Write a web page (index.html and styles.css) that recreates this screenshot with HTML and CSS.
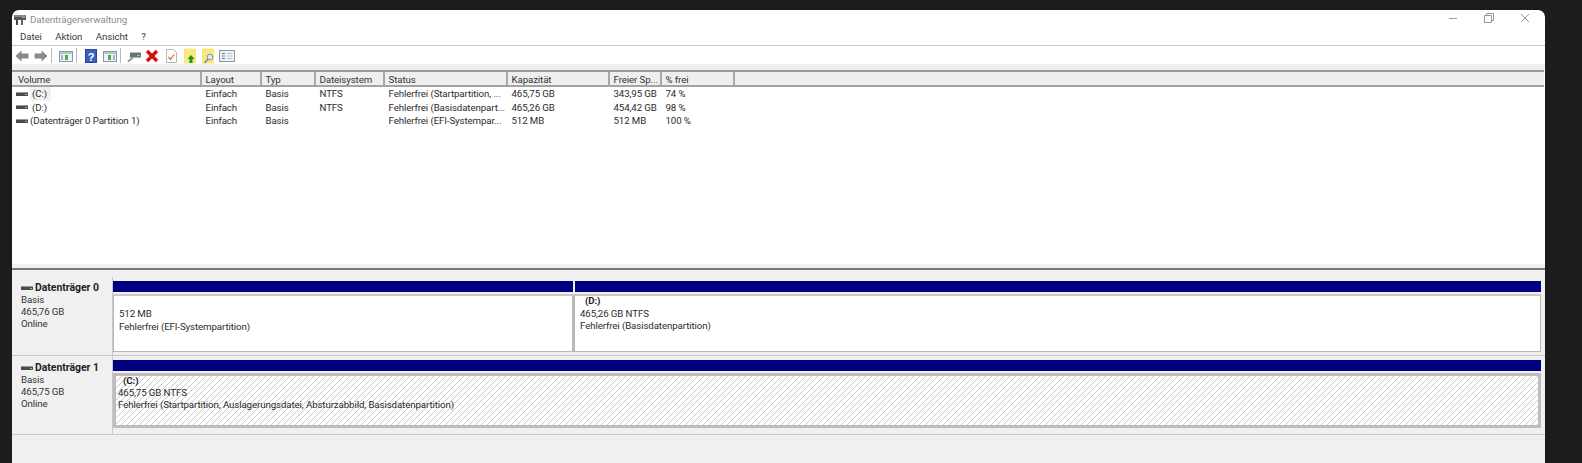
FILE: index.html
```html
<!DOCTYPE html>
<html lang="de">
<head>
<meta charset="utf-8">
<title>Datenträgerverwaltung</title>
<link rel="stylesheet" href="styles.css">
</head>
<body>
<svg class="defs" width="0" height="0">
  <defs>
    <pattern id="hatch" width="6" height="6" patternUnits="userSpaceOnUse">
      <path d="M-1 7L7 -1M-1 1L1 -1M5 7L7 5" stroke="#c9c9c9" stroke-width="1"/>
    </pattern>
    <symbol id="drive" viewBox="0 0 12 6">
      <rect x="0" y="1" width="12" height="4" fill="#4a4a4a"/>
      <rect x="0" y="1" width="12" height="1" fill="#9a9a9a"/>
      <rect x="9" y="3" width="2" height="1" fill="#7fd27f"/>
    </symbol>
  </defs>
</svg>
<main class="window">
  <header class="titlebar">
    <svg class="app-icon" width="14" height="14" viewBox="0 0 14 14"><rect x="1" y="2" width="12" height="5" fill="#555"/><rect x="1" y="2" width="12" height="2" fill="#888"/><rect x="3" y="7" width="2" height="5" fill="#444"/><rect x="8" y="7" width="2" height="5" fill="#666"/><rect x="9" y="4" width="3" height="1" fill="#7c7"/></svg>
    <span class="title">Datenträgerverwaltung</span>
    <div class="win-buttons">
      <svg width="10" height="10" viewBox="0 0 10 10"><path d="M1 5.500H9" stroke="#999" fill="none"/></svg>
      <svg width="10" height="10" viewBox="0 0 10 10"><path d="M.5 2.500H7.500V9.500H.5ZM2.500 2V.5H9.500V7.500H8" stroke="#999" fill="none"/></svg>
      <svg width="10" height="10" viewBox="0 0 10 10"><path d="M1 1L9 9M9 1L1 9" stroke="#999" fill="none"/></svg>
    </div>
  </header>
  <nav class="menubar">
    <span>Datei</span><span>Aktion</span><span>Ansicht</span><span>?</span>
  </nav>
  <div class="toolbar">
    <svg class="tool" width="16" height="14" viewBox="0 0 16 14"><path d="M1.500 7L7.500 1.500V4.500H14.500V9.500H7.500V12.500Z" fill="#8a8a8a"/></svg>
    <svg class="tool" width="16" height="14" viewBox="0 0 16 14"><path d="M14.500 7L8.500 1.500V4.500H1.500V9.500H8.500V12.500Z" fill="#8a8a8a"/></svg>
    <i class="sep sep-a"></i>
    <svg class="tool" width="16" height="14" viewBox="0 0 16 14"><rect x="1.500" y="2.500" width="13" height="10" fill="#eef2f5" stroke="#8a98a4"/><rect x="2" y="3" width="12" height="2" fill="#b8c4ce"/><rect x="7" y="6" width="3" height="5" fill="#46b04a"/><rect x="3" y="6" width="2" height="5" fill="#a9b6c0"/></svg>
    <i class="sep sep-a"></i>
    <svg class="tool" width="16" height="16" viewBox="0 0 16 16"><rect x="2.500" y="1.500" width="11" height="13" fill="#3a5fc0" stroke="#2a4797"/><text x="8" y="12.500" class="qmark">?</text></svg>
    <svg class="tool" width="16" height="14" viewBox="0 0 16 14"><rect x="1.500" y="2.500" width="13" height="10" fill="#eef2f5" stroke="#8a98a4"/><rect x="2" y="3" width="12" height="2" fill="#b8c4ce"/><rect x="6" y="6" width="3" height="5" fill="#46b04a"/><rect x="11" y="6" width="2" height="5" fill="#a9b6c0"/></svg>
    <i class="sep sep-b"></i>
    <svg class="tool" width="16" height="14" viewBox="0 0 16 14"><path d="M4 3.500H15V8.500H4Z" fill="#66757a"/><path d="M11 6h3v1h-3z" fill="#7fd27f"/><path d="M7 8.500L2 12.500" stroke="#8a9aa0" stroke-width="2"/></svg>
    <svg class="tool" width="16" height="14" viewBox="0 0 16 14"><path d="M3 2L13 12M13 2L3 12" stroke="#d40f14" stroke-width="3.400"/></svg>
    <svg class="tool" width="16" height="16" viewBox="0 0 16 16"><path d="M3.500 1.500H10.500L13.500 4.500V14.500H3.500Z" fill="#fff" stroke="#b5b5b5"/><path d="M5.500 9L7.500 11.500L11 6.500" stroke="#e2713a" stroke-width="1.300" fill="none"/></svg>
    <svg class="tool" width="16" height="16" viewBox="0 0 16 16"><rect x="2.500" y="1" width="11" height="14" fill="#fde77f" stroke="#f2d765" stroke-width=".6"/><path d="M9 7L12.500 11H10.500V15H7.500V11H5.500Z" fill="#159a1f"/></svg>
    <svg class="tool" width="16" height="16" viewBox="0 0 16 16"><rect x="2.500" y="1" width="11" height="14" fill="#fde77f" stroke="#f2d765" stroke-width=".6"/><circle cx="10" cy="9" r="2.800" fill="#dfeaf2" stroke="#7d94a8"/><path d="M8 11L4.500 15" stroke="#7d94a8" stroke-width="1.600"/></svg>
    <svg class="tool" width="16" height="12" viewBox="0 0 16 12"><rect x=".5" y=".5" width="15" height="11" fill="#eef3f7" stroke="#8a98a4"/><path d="M3 3.500H6M3 6H6M3 8.500H6" stroke="#5a7ea0"/><path d="M8 3.500H13M8 6H13M8 8.500H13" stroke="#b9c6d0"/></svg>
  </div>
  <div class="band"></div>

  <section class="volumes">
    <div class="vol-row vol-head">
      <span>Volume</span><span>Layout</span><span>Typ</span><span>Dateisystem</span><span>Status</span><span>Kapazität</span><span>Freier Sp...</span><span>% frei</span><span></span>
    </div>
    <div class="vol-row">
      <span class="vol-name"><svg class="drive-small" width="12" height="6"><use href="#drive"/></svg><b class="sel">(C:)</b></span><span>Einfach</span><span>Basis</span><span>NTFS</span><span>Fehlerfrei (Startpartition, ...</span><span>465,75 GB</span><span>343,95 GB</span><span>74 %</span><span></span>
    </div>
    <div class="vol-row">
      <span class="vol-name"><svg class="drive-small" width="12" height="6"><use href="#drive"/></svg><b class="sel plain">(D:)</b></span><span>Einfach</span><span>Basis</span><span>NTFS</span><span>Fehlerfrei (Basisdatenpart...</span><span>465,26 GB</span><span>454,42 GB</span><span>98 %</span><span></span>
    </div>
    <div class="vol-row">
      <span class="vol-name"><svg class="drive-small tight" width="12" height="6"><use href="#drive"/></svg>(Datenträger 0 Partition 1)</span><span>Einfach</span><span>Basis</span><span></span><span>Fehlerfrei (EFI-Systempar...</span><span>512 MB</span><span>512 MB</span><span>100 %</span><span></span>
    </div>
  </section>

  <div class="splitter"></div>

  <section class="disks">
    <article class="disk disk-0">
      <div class="disk-label">
        <div class="disk-name"><svg width="12" height="6"><use href="#drive"/></svg><strong>Datenträger 0</strong></div>
        <div>Basis</div><div>465,76 GB</div><div>Online</div>
      </div>
      <div class="parts">
        <div class="part efi">
          <div class="bar"></div>
          <div class="part-body efi-body"><div>512 MB</div><div>Fehlerfrei (EFI-Systempartition)</div></div>
        </div>
        <div class="part data">
          <div class="bar"></div>
          <div class="part-body"><strong class="part-name">(D:)</strong><div>465,26 GB NTFS</div><div>Fehlerfrei (Basisdatenpartition)</div></div>
        </div>
      </div>
    </article>
    <article class="disk disk-1">
      <div class="disk-label">
        <div class="disk-name"><svg width="12" height="6"><use href="#drive"/></svg><strong>Datenträger 1</strong></div>
        <div>Basis</div><div>465,75 GB</div><div>Online</div>
      </div>
      <div class="parts">
        <div class="part sys">
          <div class="bar"></div>
          <div class="part-body hatched">
            <svg class="hatch-fill" width="100%" height="100%"><rect width="100%" height="100%" fill="url(#hatch)"/></svg>
            <div class="hatch-text"><strong class="part-name">(C:)</strong><div>465,75 GB NTFS</div><div>Fehlerfrei (Startpartition, Auslagerungsdatei, Absturzabbild, Basisdatenpartition)</div></div>
          </div>
        </div>
      </div>
    </article>
  </section>
</main>
</body>
</html>
```

FILE: styles.css
```css
* { box-sizing: border-box; }
html, body { margin: 0; height: 100%; overflow: hidden; }
body {
  background: #1c1c1c;
  padding: 10px 37px 0 12px;
  font-family: Roboto, "Open Sans", sans-serif;
  font-size: 9.700px;
  letter-spacing: -.1px;
  line-height: 12px;
  color: #2b2b2b;
}
.defs { position: absolute; }
.window {
  height: 453px;
  background: #fff;
  border-radius: 7px 7px 0 0;
  overflow: hidden;
  display: flex;
  flex-direction: column;
}
.titlebar { height: 18px; display: flex; align-items: center; padding: 2px 0 0 1px; flex: none; }
.app-icon { margin-right: 3px; }
.title { color: #8d8d8d; font-size: 9.800px; }
.win-buttons { margin-left: auto; display: flex; gap: 26px; padding-right: 15px; margin-top: -5px; }
.menubar {
  height: 18px; flex: none; display: flex; gap: 13.500px; align-items: center;
  padding: 1px 0 0 8px; border-bottom: 1px solid #c8c8c8; color: #3a3a3a;
}
.toolbar { height: 18px; flex: none; display: flex; align-items: center; padding: 1px 0 0 2px; gap: 2.600px; }
.tool { flex: none; }
.sep { width: 1px; height: 15px; background: #b9b9b9; }
.sep-a { margin-right: 3px; }
.sep-b { margin-right: 2px; }
.qmark { fill: #fff; font: bold 11px "Liberation Sans", sans-serif; text-anchor: middle; }
.band { height: 6px; flex: none; background: #efefef; }

.volumes { height: 194px; flex: none; border-top: 2px solid #9b9b9b; margin-right: 1px; }
.vol-row {
  display: grid;
  grid-template-columns: 190px 60px 54px 69px 123px 102px 52px 73px 1fr;
  height: 13.500px;
  line-height: 13.500px;
}
.vol-row > span { padding-left: 3.500px; white-space: nowrap; overflow: hidden; }
.vol-head {
  height: 15px; line-height: 15px; background: #efefef;
  border-bottom: 2px solid #a3a3a3; color: #333;
}
.vol-head > span { border-right: 2px solid #a8a8a8; }
.vol-head > span:first-child { padding-left: 6px; }
.vol-head > span:last-child { border-right: 0; }
.vol-name { display: flex; align-items: center; padding-left: 4px !important; }
.drive-small { margin-right: 3px; flex: none; }
.drive-small.tight { margin-right: 2px; }
.sel { font-weight: 400; background: #f2f2f2; padding: 0 4px 0 2px; margin-left: -1px; }
.sel.plain { background: none; }

.splitter { height: 6px; flex: none; background: #f2f2f2; border-bottom: 2px solid #7a7a7a; }
.disks { flex: 1; background: #f0f0f0; padding-top: 7px; }
.disk { display: flex; border-bottom: 1px solid #c8c8c8; }
.disk-0 { height: 79px; }
.disk-1 { height: 79px; }
.disk-label {
  width: 100px; flex: none; margin-left: 1px; padding: 5px 0 0 8px;
  border-right: 1px solid #c8c8c8; color: #333;
}
.disk-1 .disk-label { padding-top: 6px; }
.disk-name { display: flex; align-items: center; gap: 2px; font-size: 10.400px; letter-spacing: 0; }
.disk-name strong { color: #222; }
.parts { flex: 1; display: flex; gap: 0; padding: 4px 4px 3px 0; min-width: 0; }
.part { display: flex; flex-direction: column; min-width: 0; }
.efi { width: 460px; margin-right: 2px; }
.data { flex: 1; }
.sys { flex: 1; }
.bar { height: 11px; background: #000080; flex: none; margin-bottom: 2px; }
.part-body {
  flex: 1; background: #fff; border: 1px solid #b8b8b8; border-top: 2px solid #c9c9c9;
  padding: 0 5px; position: relative; line-height: 12.500px;
}
.efi-body { padding-top: 12px; }
.part-name { display: block; padding-left: 5px; color: #222; margin-top: -1px; }
.data .part-body { padding: 0 5px; margin-left: -2px; border-left-width: 2px; }
.hatched { border: 3px solid #bdbdbd; padding: 0; margin-bottom: 3px; }
.hatch-fill { position: absolute; inset: 0; }
.hatch-text { position: relative; padding: 0 2px; margin-top: -1px; }
.hatch-text .part-name { margin-top: 0; line-height: 11.500px; }
```
